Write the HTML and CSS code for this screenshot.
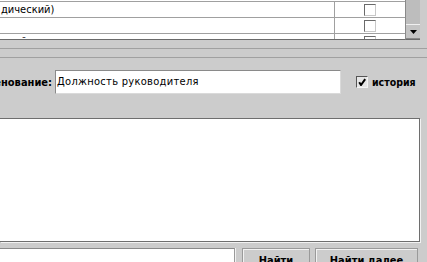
FILE: index.html
```html
<!DOCTYPE html>
<html lang="ru">
<head>
  <meta charset="UTF-8" />
  <title>Справочник должностей</title>
  <link rel="stylesheet" href="styles.css">
</head>
<body>
  <div class="grid">
    <div class="table">
      <div class="row row-cut"></div>
      <div class="row">
        <div class="cell-name">дический)</div>
        <div class="cell-flag"><span class="box"></span></div>
      </div>
      <div class="row">
        <div class="cell-name"></div>
        <div class="cell-flag"><span class="box"></span></div>
      </div>
      <div class="row">
        <div class="cell-name">сный,</div>
        <div class="cell-flag"><span class="box"></span></div>
      </div>
    </div>
    <div class="scrollbar">
      <div class="scroll-btn">
        <svg width="7" height="4" viewBox="0 0 7 4"><path d="M0 0h7L3.5 4z" fill="#000"/></svg>
      </div>
    </div>
  </div>

  <div class="divider"></div>

  <div class="panel">
    <div class="name-row">
      <div class="label">Наименование:</div>
      <div class="field">Должность руководителя</div>
      <span class="check">
        <svg width="8" height="8" viewBox="0 0 8 8"><path d="M1.2 4.2L3 7L7.2 1.2" fill="none" stroke="#000" stroke-width="2"/></svg>
      </span>
      <span class="check-label">история</span>
    </div>

    <div class="memo"></div>

    <div class="search-row">
      <div class="search-field"></div>
      <button class="btn btn-find">Найти</button>
      <button class="btn btn-next">Найти далее</button>
    </div>
  </div>
</body>
</html>
```

FILE: styles.css
```css
body {
  margin: 0;
  width: 427px;
  height: 262px;
  overflow: hidden;
  background-color: #cccccc;
  font-family: 'DejaVu Sans Condensed', 'DejaVu Sans', sans-serif;
  font-size: 11px;
  color: #000;
}

.grid {
  display: flex;
  height: 40px;
  padding-right: 7px;
}

.table {
  flex: 1;
  background-color: #fff;
  border-bottom: 1px solid #6a6a6a;
  overflow: hidden;
}

.row {
  display: flex;
  height: 15px;
  border-bottom: 1px solid #a0a0a0;
}

.row-cut {
  height: 1px;
}

.cell-name {
  width: 333px;
  padding-left: 1px;
  border-right: 1px solid #a0a0a0;
  line-height: 15px;
  white-space: nowrap;
}

.cell-flag {
  flex: 1;
  display: flex;
  align-items: center;
  justify-content: center;
}

.box {
  width: 10px;
  height: 10px;
  background-color: #fff;
  border: 1px solid;
  border-color: #6a6a6a #c8c8c8 #c8c8c8 #6a6a6a;
}

.scrollbar {
  width: 15px;
  display: flex;
  flex-direction: column;
  justify-content: flex-end;
  background-color: #bdbdbd;
  border-left: 1px solid #8a8a8a;
  border-bottom: 1px solid #6a6a6a;
  box-sizing: border-box;
}

.scroll-btn {
  height: 15px;
  display: flex;
  align-items: center;
  justify-content: center;
  background-color: #c4c4c4;
  border-top: 1px solid #f0f0f0;
  border-bottom: 1px solid #888;
  box-sizing: border-box;
}

.divider {
  height: 8px;
  border-bottom: 1px solid #a0a0a0;
}

.panel {
  margin-top: 8px;
  border-top: 1px solid #a0a0a0;
  padding-top: 12px;
}

.name-row {
  display: flex;
  align-items: center;
  height: 24px;
}

.label {
  width: 52px;
  display: flex;
  justify-content: flex-end;
  white-space: nowrap;
  font-weight: bold;
  margin-right: 3px;
}

.field {
  width: 283px;
  height: 22px;
  line-height: 22px;
  padding-left: 1px;
  background-color: #fff;
  border: 1px solid;
  border-color: #8a8a8a #dadada #dadada #8a8a8a;
  letter-spacing: 0.3px;
  white-space: nowrap;
}

.check {
  width: 10px;
  height: 10px;
  margin-left: 15px;
  display: flex;
  align-items: center;
  justify-content: center;
  background-color: #e6e6e6;
  border: 1px solid;
  border-color: #555 #f4f4f4 #f4f4f4 #555;
}

.check-label {
  margin-left: 4px;
  font-weight: bold;
  font-size: 10.5px;
}

.memo {
  margin-top: 24px;
  width: 419px;
  height: 122px;
  background-color: #fff;
  border: 1px solid #6e6e6e;
  border-left: none;
  box-shadow: 1px 1px 0 #f2f2f2;
}

.search-row {
  display: flex;
  margin-top: 6px;
}

.search-field {
  width: 234px;
  height: 26px;
  background-color: #fff;
  border: 1px solid;
  border-color: #8a8a8a #9a9a9a #9a9a9a #8a8a8a;
  border-left: none;
  box-shadow: 1px 0 0 #f2f2f2;
}

.btn {
  height: 28px;
  margin: 0;
  padding: 5px 0 0;
  background-color: #cccccc;
  border: 1px solid #9a9a9a;
  box-shadow: inset 1px 1px 0 #f2f2f2;
  font-family: inherit;
  font-size: 11px;
  font-weight: bold;
  display: flex;
  justify-content: center;
  align-items: flex-start;
}

.btn-find {
  width: 68px;
  margin-left: 7px;
}

.btn-next {
  width: 103px;
  margin-left: 5px;
}
```
